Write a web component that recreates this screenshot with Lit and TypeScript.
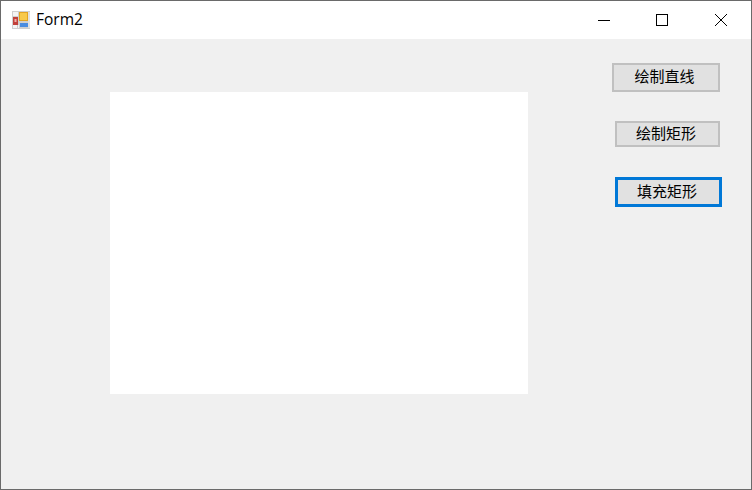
import { LitElement, html, css } from "lit";
import { customElement } from "lit/decorators.js";

@customElement("app-root")
export class AppRoot extends LitElement {
  static styles = css`
    :host { display: block; width: 752px; height: 490px; }
    .win {
      box-sizing: border-box; width: 752px; height: 490px;
      border: 1px solid #6a6a6a; background: #f0f0f0;
      display: flex; flex-direction: column;
      font-family: "Noto Sans CJK SC", sans-serif;
    }
    .title { height: 38px; background: #fff; display: flex; align-items: center; flex: none; }
    .app-icon { margin-left: 11px; width: 18px; height: 18px; flex: none; }
    .name {
      margin-left: 6px; font: 15.5px "Open Sans", "Liberation Sans", sans-serif; color: #000;
      flex: 1; position: relative; top: -1px;
    }
    .ctl { width: 58px; height: 38px; display: flex; align-items: center; justify-content: center; flex: none; }
    .ctl svg { width: 14px; height: 14px; display: block; }
    .close { margin-right: 1px; margin-left: 1px; }
    .body { flex: 1; display: flex; background: #f0f0f0; }
    .canvas { width: 418px; height: 302px; margin: 53px 0 0 109px; background: #fff; flex: none; }
    .side { display: flex; flex-direction: column; align-items: flex-start; margin-left: 84px; padding-top: 24px; }
    button {
      box-sizing: border-box; margin: 0; padding: 0 3px 4px 0; background: #e1e1e1;
      border: 2px solid #c0c0c0; color: #000;
      font: 400 15px/1 "Noto Sans CJK SC", sans-serif; display: block;
    }
    .b1 { width: 108px; height: 29px; }
    .b2 { width: 105px; height: 26px; margin: 29px 0 0 3px; }
    .b3 { width: 107px; height: 30px; margin: 30px 0 0 3px; border-color: #0078d7; border-width: 3px; padding-bottom: 3px; }
  `;
  render() {
    return html`<div class="win">
      <div class="title">
        <svg class="app-icon" viewBox="0 0 18 18">
          <rect x="0" y="0" width="18" height="18" fill="#cfcfcf"/>
          <rect x="1" y="1" width="5" height="4" fill="#f4f4f4"/>
          <rect x="1" y="14" width="4" height="3" fill="#f4f4f4"/>
          <rect x="6" y="14" width="1" height="3" fill="#f4f4f4"/>
          <rect x="1" y="6" width="5" height="8" fill="#c2403a"/>
          <rect x="2.5" y="8" width="2" height="3" fill="#efb0a8"/>
          <rect x="7" y="1" width="9" height="9" fill="#e3a422"/>
          <rect x="8" y="2" width="7" height="7" fill="#f8c94a"/>
          <rect x="8" y="12" width="8" height="4" fill="#4a8ce0"/>
          <rect x="16.5" y="1" width="1" height="16" fill="#f4f4f4"/>
        </svg>
        <span class="name">Form2</span>
        <div class="ctl"><svg viewBox="0 0 14 14"><path d="M1 7.5H13" stroke="#000" fill="none"/></svg></div>
        <div class="ctl"><svg viewBox="0 0 14 14"><rect x="1.5" y="1.5" width="11" height="11" stroke="#000" fill="none"/></svg></div>
        <div class="ctl close"><svg viewBox="0 0 14 14"><path d="M1 1L13 13M13 1L1 13" stroke="#000" fill="none"/></svg></div>
      </div>
      <div class="body">
        <div class="canvas"></div>
        <div class="side">
          <button class="b1">绘制直线</button>
          <button class="b2">绘制矩形</button>
          <button class="b3">填充矩形</button>
        </div>
      </div>
    </div>`;
  }
}
